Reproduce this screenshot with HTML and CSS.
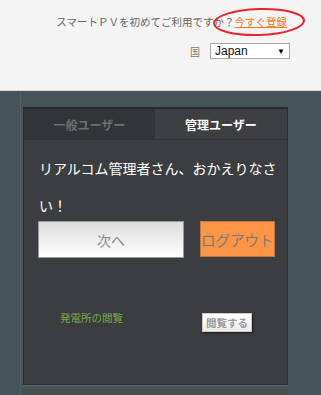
FILE: index.html
```html
<!DOCTYPE html>
<html lang="ja">
<head>
<meta charset="utf-8">
<link rel="stylesheet" href="styles.css">
</head>
<body>
<header class="top">
  <p class="signup"><span>スマートＰＶを初めてご利用ですか？</span><a class="signup-link" href="#">今すぐ登録</a><svg class="circle" width="100" height="32" viewBox="0 0 100 32"><ellipse cx="50" cy="16" rx="45" ry="13" fill="none" stroke="#e8252b" stroke-width="2" transform="rotate(-2 50 16)"/></svg></p>
  <div class="country">
    <span class="country-label">国</span>
    <div class="select"><span>Japan</span><span class="arrow">▼</span></div>
  </div>
</header>
<main class="main">
  <section class="panel">
    <div class="tabs">
      <div class="tab">一般ユーザー</div>
      <div class="tab active">管理ユーザー</div>
    </div>
    <div class="content">
      <p class="title">リアルコム管理者さん、おかえりなさい！</p>
      <div class="actions">
        <button class="btn-next">次へ</button>
        <button class="btn-logout">ログアウト</button>
      </div>
      <div class="row">
        <span class="row-label">発電所の閲覧</span>
        <button class="btn-view">閲覧する</button>
      </div>
    </div>
  </section>
  <section class="panel2"></section>
</main>
</body>
</html>
```
FILE: styles.css
```css
html, body {
  margin: 0;
  padding: 0;
}
body {
  width: 321px;
  height: 395px;
  overflow: hidden;
  font-family: "Liberation Sans", "Noto Sans CJK JP", sans-serif;
  background: #465359;
}
.top {
  height: 91px;
  box-sizing: border-box;
  background: #f4f4f4;
  border-bottom: 1px solid #d9d9d9;
  padding: 14px 34px 0 0;
  display: flex;
  flex-direction: column;
  align-items: flex-end;
}
.signup {
  margin: 0;
  font-size: 10.5px;
  line-height: 16px;
  color: #666;
  position: relative;
}
.signup-link {
  color: #f47b20;
  text-decoration: underline;
}
.circle {
  position: absolute;
  right: -22px;
  top: -8px;
}
.country {
  margin-top: 13px;
  margin-right: -3px;
  display: flex;
  align-items: center;
  gap: 10px;
}
.country-label {
  font-size: 10px;
  color: #777;
}
.select {
  width: 80px;
  height: 16px;
  box-sizing: border-box;
  border: 1px solid #a9a9a9;
  background: #fff;
  display: flex;
  align-items: center;
  justify-content: space-between;
  padding: 0 4px 0 4px;
  font-size: 12px;
  color: #111;
}
.arrow {
  font-size: 8px;
  color: #000;
}
.main {
  height: 304px;
  box-sizing: border-box;
  padding: 16px 33px 0 23px;
  background: linear-gradient(to right, #465359 20px, #506068 20px, #506068 21px, #465359 21px);
}
.panel {
  height: 278px;
  box-sizing: border-box;
  background: #3c3d41;
  border: 1px solid #2e2f32;
  border-top: 2px solid #2a2b2e;
  box-shadow: 0 1px 0 #56656c;
}
.tabs {
  display: grid;
  grid-template-columns: 131px 1fr;
  height: 31px;
  box-sizing: border-box;
  border-bottom: 1px solid #303134;
}
.tab {
  display: flex;
  align-items: center;
  justify-content: center;
  font-size: 12px;
  font-weight: bold;
  color: #6d6e71;
  background: #333437;
}
.tab.active {
  color: #fff;
  background: #3e3f43;
}
.content {
  padding: 0 8px 0 14px;
}
.title {
  margin: 0;
  padding: 11px 0 0 1px;
  font-size: 14px;
  line-height: 37px;
  color: #fff;
}
.actions {
  margin-top: -4px;
  display: flex;
  gap: 16px;
}
.btn-next {
  width: 146px;
  height: 37px;
  border: 1px solid #9a9a9a;
  background: linear-gradient(#dcdcdc, #ffffff);
  color: #888;
  font-family: inherit;
  font-size: 14px;
  padding: 0;
}
.btn-logout {
  height: 36px;
  border: 1px solid #b87a45;
  background: #fd9545;
  color: #7a7a7a;
  font-family: inherit;
  font-size: 14.5px;
  padding: 0;
}
.row {
  margin-top: 53px;
  display: flex;
  align-items: flex-start;
}
.row-label {
  width: 164px;
  padding-left: 22px;
  box-sizing: border-box;
  font-size: 10.5px;
  line-height: 14px;
  color: #7aaa45;
}
.btn-view {
  margin-top: 2px;
  height: 19px;
  padding: 0 3px;
  border: 1px solid #ccc;
  background: linear-gradient(#ffffff, #ececec);
  box-shadow: 1px 1px 2px rgba(0,0,0,0.6);
  color: #9a9a9a;
  font-family: inherit;
  font-size: 10.5px;
  font-weight: bold;
}
.panel2 {
  margin-top: 4px;
  height: 20px;
  background: #4c4c4f;
}
```
